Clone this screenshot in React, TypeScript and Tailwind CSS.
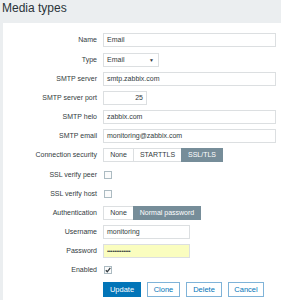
import React from "react";

function Row({ label, children, extra = "" }: { label: string; children?: React.ReactNode; extra?: string }) {
  return (
    <div className={`flex items-center h-[14px] ${extra}`}>
      <div className="w-[94px] text-right text-[7px] leading-[8px] text-[#333b40]">{label}</div>
      <div className="ml-[6px] flex items-center h-full">{children}</div>
    </div>
  );
}

function Input({ value, w, right, bg = "bg-white" }: { value: string; w: string; right?: boolean; bg?: string }) {
  return (
    <div
      className={`h-[14px] ${w} ${bg} border border-[#dcdfe1] text-[7px] leading-[8px] text-[#333b40] px-[3px] flex items-center ${right ? "justify-end" : ""}`}
    >
      {value}
    </div>
  );
}

function Seg({ items, active }: { items: { t: string; w: string }[]; active: number }) {
  return (
    <div className="flex h-[14px]">
      {items.map((it, i) => (
        <div
          key={it.t}
          className={`${it.w} h-[14px] flex items-center justify-center text-[7px] leading-[8px] ${
            i === active ? "bg-[#768d99] text-white border border-[#768d99]" : "bg-white text-[#333b40] border border-[#dcdfe1]"
          } ${i > 0 ? "-ml-px" : ""}`}
        >
          {it.t}
        </div>
      ))}
    </div>
  );
}

function Check({ checked }: { checked?: boolean }) {
  return (
    <div className="w-[8px] h-[8px] border border-[#acbbc2] bg-[#fbfbfb] flex items-center justify-center ml-px">
      {checked && (
        <svg width="6" height="6" viewBox="0 0 6 6">
          <path d="M0.8 3.2 L2.3 4.8 L5.3 0.9" stroke="#333b40" strokeWidth="1.3" fill="none" />
        </svg>
      )}
    </div>
  );
}

export default function App() {
  return (
    <div className="w-[281px] h-[300px] bg-[#ebeef0] overflow-hidden font-[Liberation_Sans,Arial,sans-serif]">
      <div className="h-[23px] pl-[2px] pt-[1px]">
        <div className="text-[12px] leading-[14px] text-[#2a3338]">Media types</div>
      </div>
      <div className="ml-[3px] bg-white h-[277px] pt-[10px] flex flex-col gap-[5px]">
        <Row label="Name">
          <Input value="Email" w="w-[173px]" />
        </Row>
        <Row label="Type" extra="mt-px">
          <div className="h-[14px] w-[56px] bg-white border border-[#dcdfe1] text-[7px] leading-[8px] text-[#333b40] px-[3px] flex items-center justify-between">
            <span>Email</span>
            <span className="text-[5px] pr-[1px]">▼</span>
          </div>
        </Row>
        <Row label="SMTP server">
          <Input value="smtp.zabbix.com" w="w-[173px]" />
        </Row>
        <Row label="SMTP server port">
          <Input value="25" w="w-[44px]" right />
        </Row>
        <Row label="SMTP helo">
          <Input value="zabbix.com" w="w-[173px]" />
        </Row>
        <Row label="SMTP email">
          <Input value="monitoring@zabbix.com" w="w-[173px]" />
        </Row>
        <Row label="Connection security">
          <Seg
            active={2}
            items={[
              { t: "None", w: "w-[31px]" },
              { t: "STARTTLS", w: "w-[49px]" },
              { t: "SSL/TLS", w: "w-[42px]" },
            ]}
          />
        </Row>
        <Row label="SSL verify peer" extra="mt-px">
          <Check />
        </Row>
        <Row label="SSL verify host">
          <Check />
        </Row>
        <Row label="Authentication">
          <Seg
            active={1}
            items={[
              { t: "None", w: "w-[31px]" },
              { t: "Normal password", w: "w-[68px]" },
            ]}
          />
        </Row>
        <Row label="Username">
          <Input value="monitoring" w="w-[87px]" />
        </Row>
        <Row label="Password">
          <div className="h-[14px] w-[87px] bg-[#fafdbf] border border-[#dcdfe1] px-[3px] flex items-center text-[6px] leading-[6px] text-[#333b40] tracking-[-0.3px]">
            •••••••••••••
          </div>
        </Row>
        <Row label="Enabled">
          <Check checked />
        </Row>
        <div className="flex h-[15px] pl-[100px] gap-[6px]">
          <div className="w-[38px] h-[15px] bg-[#0275b8] text-white text-[7.5px] flex items-center justify-center">Update</div>
          <div className="w-[33px] h-[15px] bg-white border border-[#7fb3d8] text-[#0275b8] text-[7.5px] flex items-center justify-center">Clone</div>
          <div className="w-[36px] h-[15px] bg-white border border-[#7fb3d8] text-[#0275b8] text-[7.5px] flex items-center justify-center">Delete</div>
          <div className="w-[36px] h-[15px] bg-white border border-[#7fb3d8] text-[#0275b8] text-[7.5px] flex items-center justify-center">Cancel</div>
        </div>
      </div>
    </div>
  );
}
